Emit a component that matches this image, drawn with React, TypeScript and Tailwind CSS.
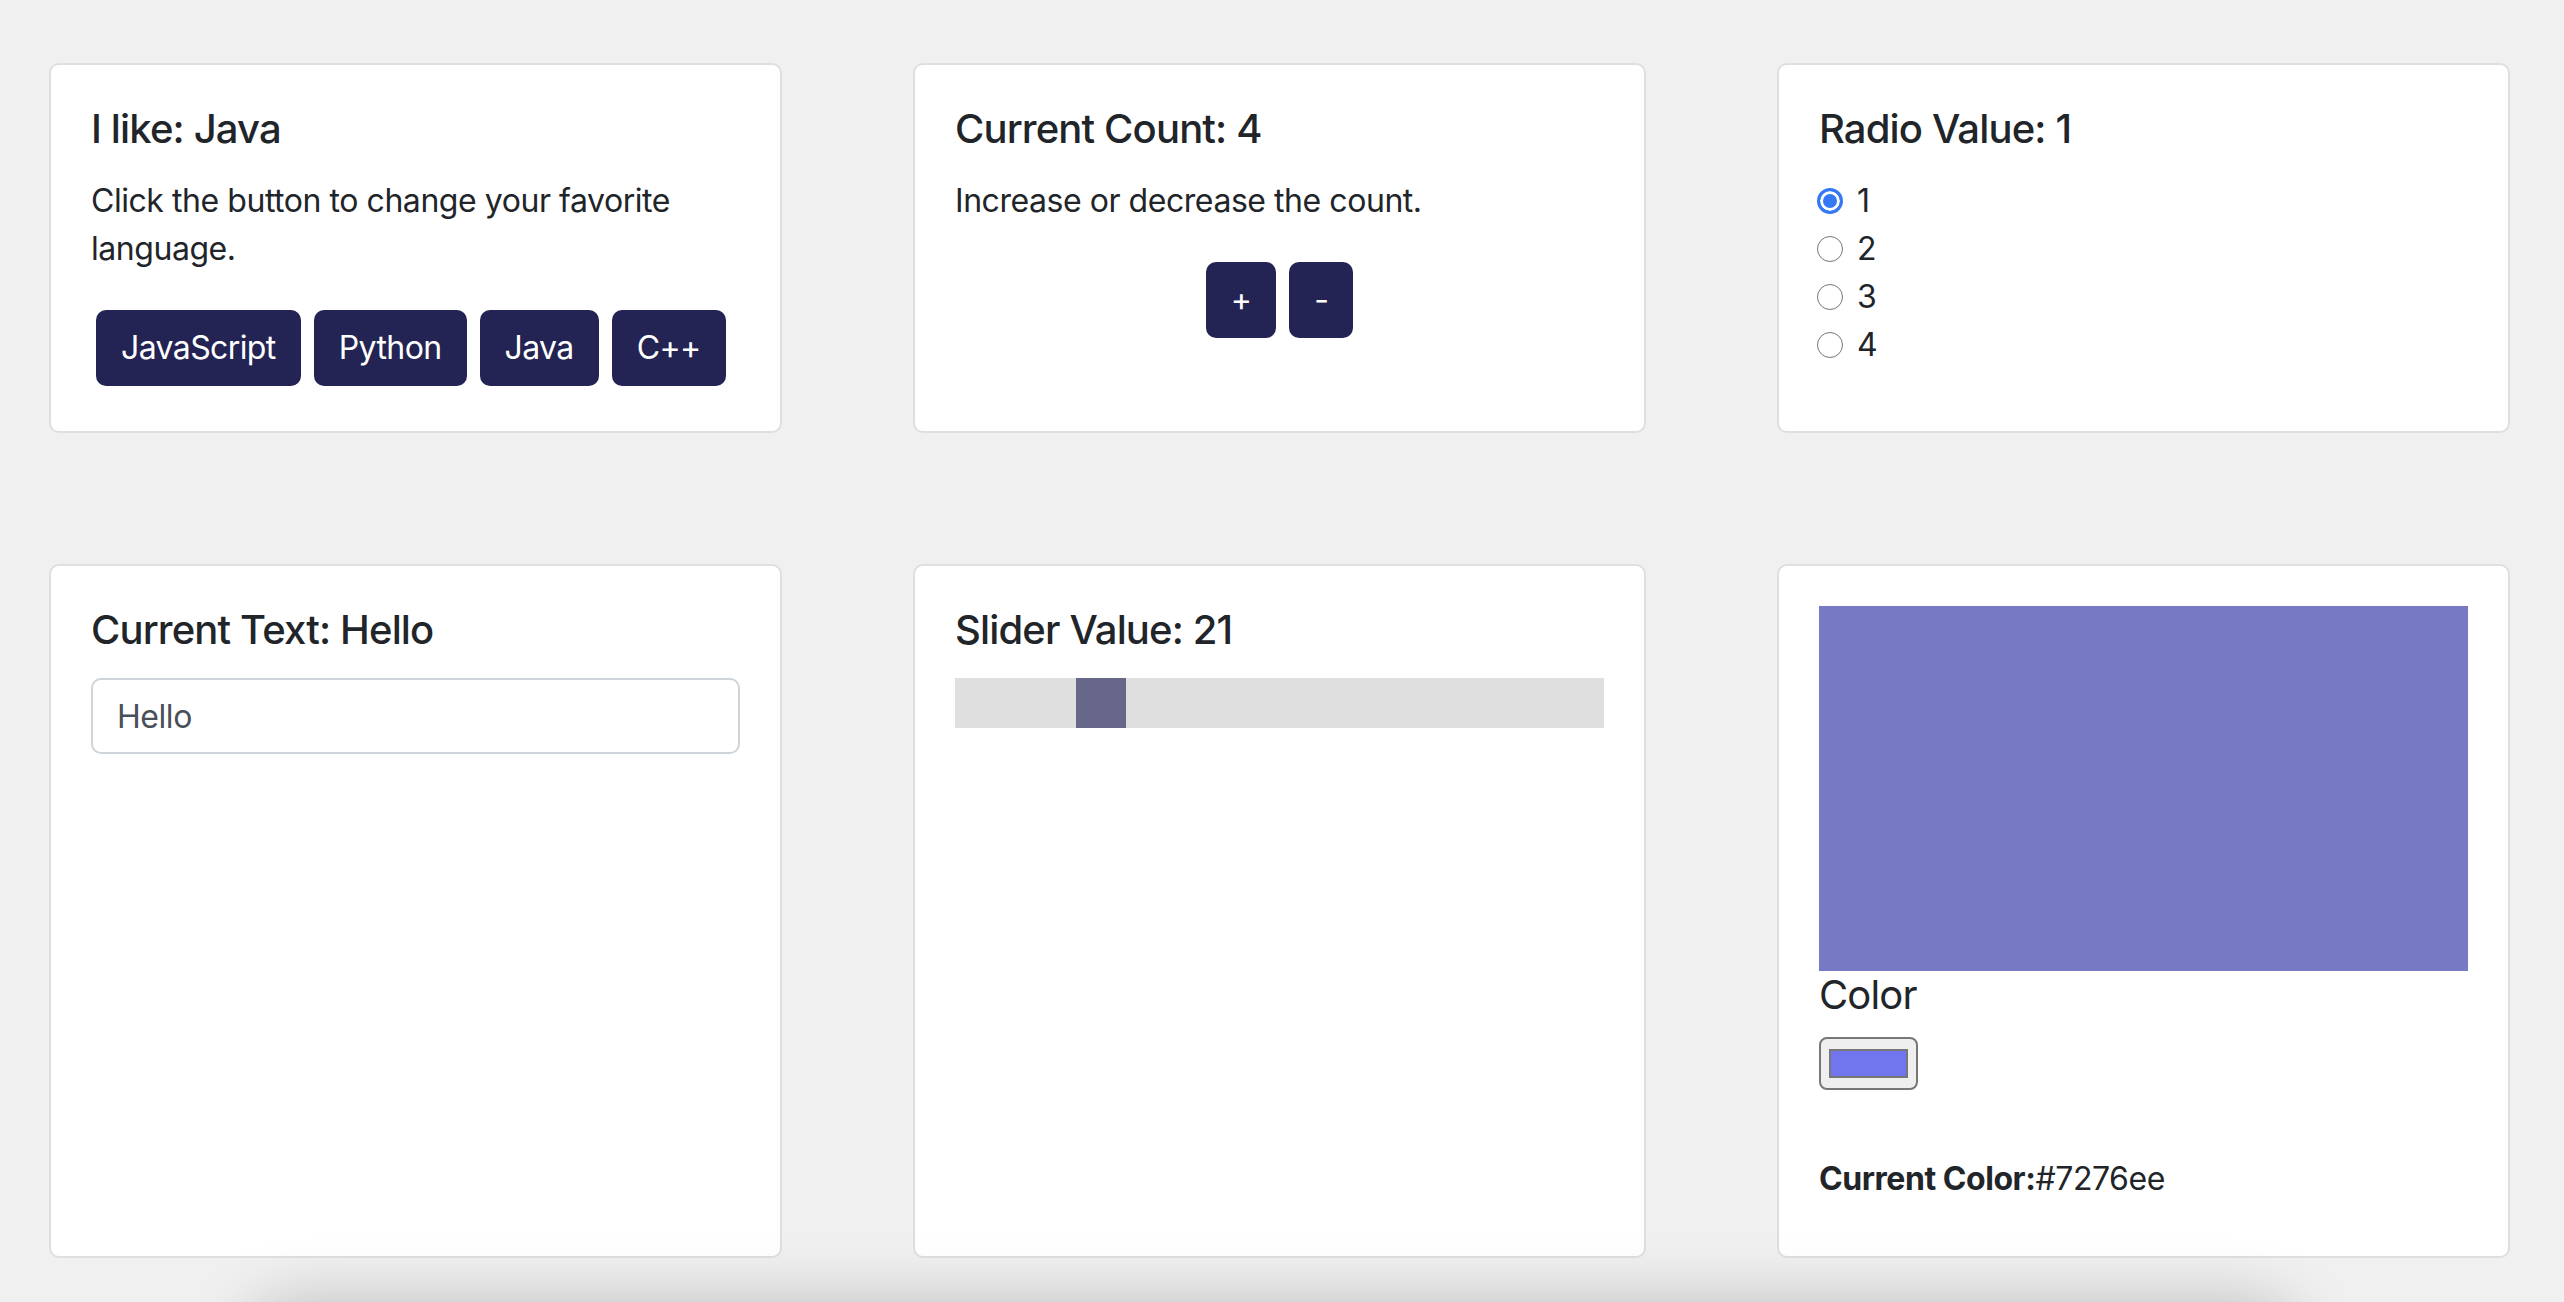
import { useState } from 'react'

const languages = ['JavaScript', 'Python', 'Java', 'C++']
const radioOptions = ['1', '2', '3', '4']

function Card({ children, className = '' }: { children: React.ReactNode; className?: string }) {
  return (
    <div className={`rounded-[10px] border-2 border-[#dfdfdf] bg-white p-10 ${className}`}>{children}</div>
  )
}

function Title({ children }: { children: React.ReactNode }) {
  return <h5 className="mb-6 text-[40px] font-medium leading-[48px] tracking-[-0.85px]">{children}</h5>
}

function NavyButton({ label, onClick }: { label: string; onClick: () => void }) {
  return (
    <button
      type="button"
      className="rounded-[10px] border-2 border-[#242454] bg-[#242454] px-[23px] py-3 text-[32px] leading-[48px] tracking-[-0.6px] text-white"
      onClick={onClick}
    >
      {label}
    </button>
  )
}

export default function App() {
  const [language, setLanguage] = useState('Java')
  const [count, setCount] = useState(4)
  const [radio, setRadio] = useState('1')
  const [text, setText] = useState('Hello')
  const [slider, setSlider] = useState(21)
  const [color] = useState('#7276ee')

  // thumb travels over (track width - thumb width), range 1..100
  const thumbLeft = ((slider - 1) / 99) * 600

  return (
    <div
      className="relative h-[1302px] overflow-hidden bg-[#f0f0f0] text-[#212529]"
      style={{ fontFamily: 'Inter, "Noto Sans", sans-serif' }}
    >
      <div className="grid grid-cols-[733px_733px_733px] gap-[131px] pl-[49px] pt-[63px]">
        <Card>
          <Title>I like: {language}</Title>
          <p className="mb-8 text-[32px] leading-[48px] tracking-[-0.45px]">
            Click the button to change your favorite language.
          </p>
          <div className="ml-[5px] flex gap-[13px] py-[5px]">
            {languages.map((l) => (
              <NavyButton key={l} label={l} onClick={() => setLanguage(l)} />
            ))}
          </div>
        </Card>

        <Card>
          <Title>Current Count: {count}</Title>
          <p className="mb-8 text-[32px] leading-[48px] tracking-[-0.45px]">Increase or decrease the count.</p>
          <div className="flex justify-center gap-[13px] py-[5px]">
            <NavyButton label="+" onClick={() => setCount((c) => c + 1)} />
            <NavyButton label="-" onClick={() => setCount((c) => c - 1)} />
          </div>
        </Card>

        <Card>
          <Title>Radio Value: {radio}</Title>
          <div className="flex flex-col">
            {radioOptions.map((o) => (
              <label key={o} className="flex h-12 items-center gap-[14px] text-[32px] leading-[48px]">
                <input
                  type="radio"
                  name="radio"
                  value={o}
                  checked={radio === o}
                  onChange={() => setRadio(o)}
                  className="-ml-[2px] h-[26px] w-[26px] appearance-none rounded-full border-[1.5px] border-[#767676] bg-white checked:border-[3px] checked:border-[#3478f6] checked:bg-[#3478f6] checked:shadow-[inset_0_0_0_3px_white]"
                />
                {o}
              </label>
            ))}
          </div>
        </Card>

        <Card>
          <Title>Current Text: {text}</Title>
          <input
            type="text"
            value={text}
            onChange={(e) => setText(e.target.value)}
            className="h-[76px] w-full rounded-[10px] border-2 border-[#ced4da] bg-white px-6 text-[32px] leading-[48px] tracking-[-0.45px] text-[#495057] outline-none"
          />
        </Card>

        <Card>
          <Title>Slider Value: {slider}</Title>
          <div
            className="relative h-[50px] w-full cursor-pointer bg-[#dfdfdf]"
            onClick={(e) => {
              const r = e.currentTarget.getBoundingClientRect()
              const v = Math.round(((e.clientX - r.left - 25) / 600) * 99 + 1)
              setSlider(Math.min(100, Math.max(1, v)))
            }}
          >
            <div className="absolute top-0 h-[50px] w-[50px] bg-[#676789]" style={{ left: thumbLeft }} />
          </div>
        </Card>

        <Card>
          <div className="h-[365px] w-full bg-[#7879c4]" />
          <div className="text-[40px] leading-[48px] tracking-[-0.85px]">Color</div>
          <div className="mt-[18px] flex h-[53px] w-[99px] items-center justify-center rounded-[8px] border-2 border-[#777777] bg-[#efefef]">
            <div className="h-[29px] w-[79px] border-2 border-[#777777]" style={{ background: color }} />
          </div>
          <p className="mb-[13px] mt-[65px] text-[32px] leading-[48px] tracking-[-0.45px]">
            <span className="font-bold">Current Color:</span>
            {color}
          </p>
        </Card>
      </div>

      <div className="pointer-events-none absolute left-[240px] right-[260px] top-[1300px] h-[120px] rounded-[60px] bg-black/20 blur-[30px]" />
    </div>
  )
}
